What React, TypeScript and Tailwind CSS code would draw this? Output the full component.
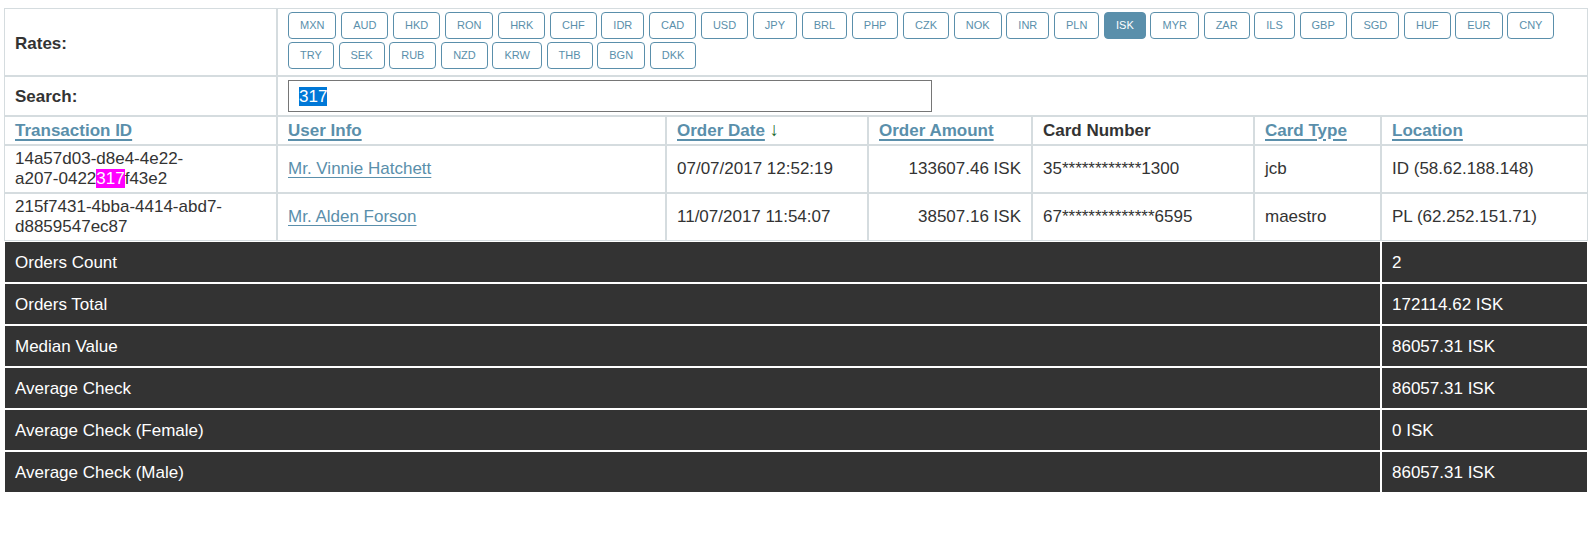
import React from "react";

const row1 = ["MXN","AUD","HKD","RON","HRK","CHF","IDR","CAD","USD","JPY","BRL","PHP","CZK","NOK","INR","PLN","ISK","MYR","ZAR","ILS","GBP","SGD","HUF","EUR","CNY"];
const row2 = ["TRY","SEK","RUB","NZD","KRW","THB","BGN","DKK"];

function RateBtn({ code }: { code: string }) {
  const active = code === "ISK";
  return (
    <button
      className={
        "h-[27px] px-[11px] rounded-[4px] border text-[11px] leading-none flex items-center " +
        (active
          ? "bg-[#5a8fab] border-[#5a8fab] text-white"
          : "bg-white border-[#5a8fab] text-[#5a8fab]")
      }
    >
      {code}
    </button>
  );
}

const cell = "border border-[#d5dcdf] px-[10px] py-0 align-middle text-left";
const dark = "border border-white bg-[#333333] text-white px-[10px] pt-[2px] pb-0 align-middle h-[42px]";
const link = "text-[#5a8fab] underline decoration-[2px] underline-offset-[3px] font-bold";
const ulink = "text-[#5a8fab] underline decoration-[1px] underline-offset-[3px]";

const summary: [string, string][] = [
  ["Orders Count", "2"],
  ["Orders Total", "172114.62 ISK"],
  ["Median Value", "86057.31 ISK"],
  ["Average Check", "86057.31 ISK"],
  ["Average Check (Female)", "0 ISK"],
  ["Average Check (Male)", "86057.31 ISK"],
];

export default function App() {
  return (
    <div className="min-h-[544px] bg-white pl-[4px] pt-[8px] font-['Liberation_Sans',Arial,sans-serif] text-[17px] text-[#333333]">
      <table className="table-fixed border-separate border-spacing-0 w-[1584px]">
        <colgroup>
          <col className="w-[273px]" />
          <col className="w-[389px]" />
          <col className="w-[202px]" />
          <col className="w-[164px]" />
          <col className="w-[222px]" />
          <col className="w-[127px]" />
          <col className="w-[207px]" />
        </colgroup>
        <tbody>
          <tr>
            <td className={cell + " h-[68px] pt-[4px] font-bold"}>Rates:</td>
            <td colSpan={6} className={cell + " h-[68px] pt-[3px] pb-[6px]"}>
              <div className="flex flex-col gap-[3px]">
                <div className="flex gap-[4.7px]">
                  {row1.map((c) => (
                    <RateBtn key={c} code={c} />
                  ))}
                </div>
                <div className="flex gap-[4.7px]">
                  {row2.map((c) => (
                    <RateBtn key={c} code={c} />
                  ))}
                </div>
              </div>
            </td>
          </tr>
          <tr>
            <td className={cell + " h-[40px] pt-[2px] font-bold"}>Search:</td>
            <td colSpan={6} className={cell + " h-[40px]"}>
              <div className="w-[644px] h-[32px] border border-[#767676] flex items-center pl-[10px]">
                <span className="bg-[#0078d7] text-white leading-[19px]">317</span>
              </div>
            </td>
          </tr>
          <tr>
            <th className={cell + " h-[28px] pt-[1px]"}>
              <span className={link}>Transaction ID</span>
            </th>
            <th className={cell + " h-[28px] pt-[1px]"}>
              <span className={link}>User Info</span>
            </th>
            <th className={cell + " h-[28px] pt-[1px] font-normal"}>
              <span className={link}>Order Date</span>{" "}
              <span className="text-[#236b30] text-[19px] leading-none">↓</span>
            </th>
            <th className={cell + " h-[28px] pt-[1px]"}>
              <span className={link}>Order Amount</span>
            </th>
            <th className={cell + " h-[28px] pt-[1px] font-bold"}>Card Number</th>
            <th className={cell + " h-[28px] pt-[1px]"}>
              <span className={link}>Card Type</span>
            </th>
            <th className={cell + " h-[28px] pt-[1px]"}>
              <span className={link}>Location</span>
            </th>
          </tr>
          <tr>
            <td className={cell + " h-[48px] pt-[1px] leading-[20px]"}>
              14a57d03-d8e4-4e22-
              <br />
              a207-0422<span className="bg-[#ff00ff] text-white">317</span>f43e2
            </td>
            <td className={cell + " h-[48px] pt-[1px]"}>
              <span className={ulink}>Mr. Vinnie Hatchett</span>
            </td>
            <td className={cell + " h-[48px] pt-[1px]"}>07/07/2017 12:52:19</td>
            <td className={cell + " h-[48px] pt-[1px] text-right"}>133607.46 ISK</td>
            <td className={cell + " h-[48px] pt-[1px]"}>35************1300</td>
            <td className={cell + " h-[48px] pt-[1px]"}>jcb</td>
            <td className={cell + " h-[48px] pt-[1px]"}>ID (58.62.188.148)</td>
          </tr>
          <tr>
            <td className={cell + " h-[48px] leading-[20px]"}>
              215f7431-4bba-4414-abd7-
              <br />
              d8859547ec87
            </td>
            <td className={cell + " h-[48px]"}>
              <span className={ulink}>Mr. Alden Forson</span>
            </td>
            <td className={cell + " h-[48px]"}>11/07/2017 11:54:07</td>
            <td className={cell + " h-[48px] text-right"}>38507.16 ISK</td>
            <td className={cell + " h-[48px]"}>67**************6595</td>
            <td className={cell + " h-[48px]"}>maestro</td>
            <td className={cell + " h-[48px]"}>PL (62.252.151.71)</td>
          </tr>
          {summary.map(([label, value]) => (
            <tr key={label}>
              <td colSpan={6} className={dark}>
                {label}
              </td>
              <td className={dark}>{value}</td>
            </tr>
          ))}
        </tbody>
      </table>
    </div>
  );
}
